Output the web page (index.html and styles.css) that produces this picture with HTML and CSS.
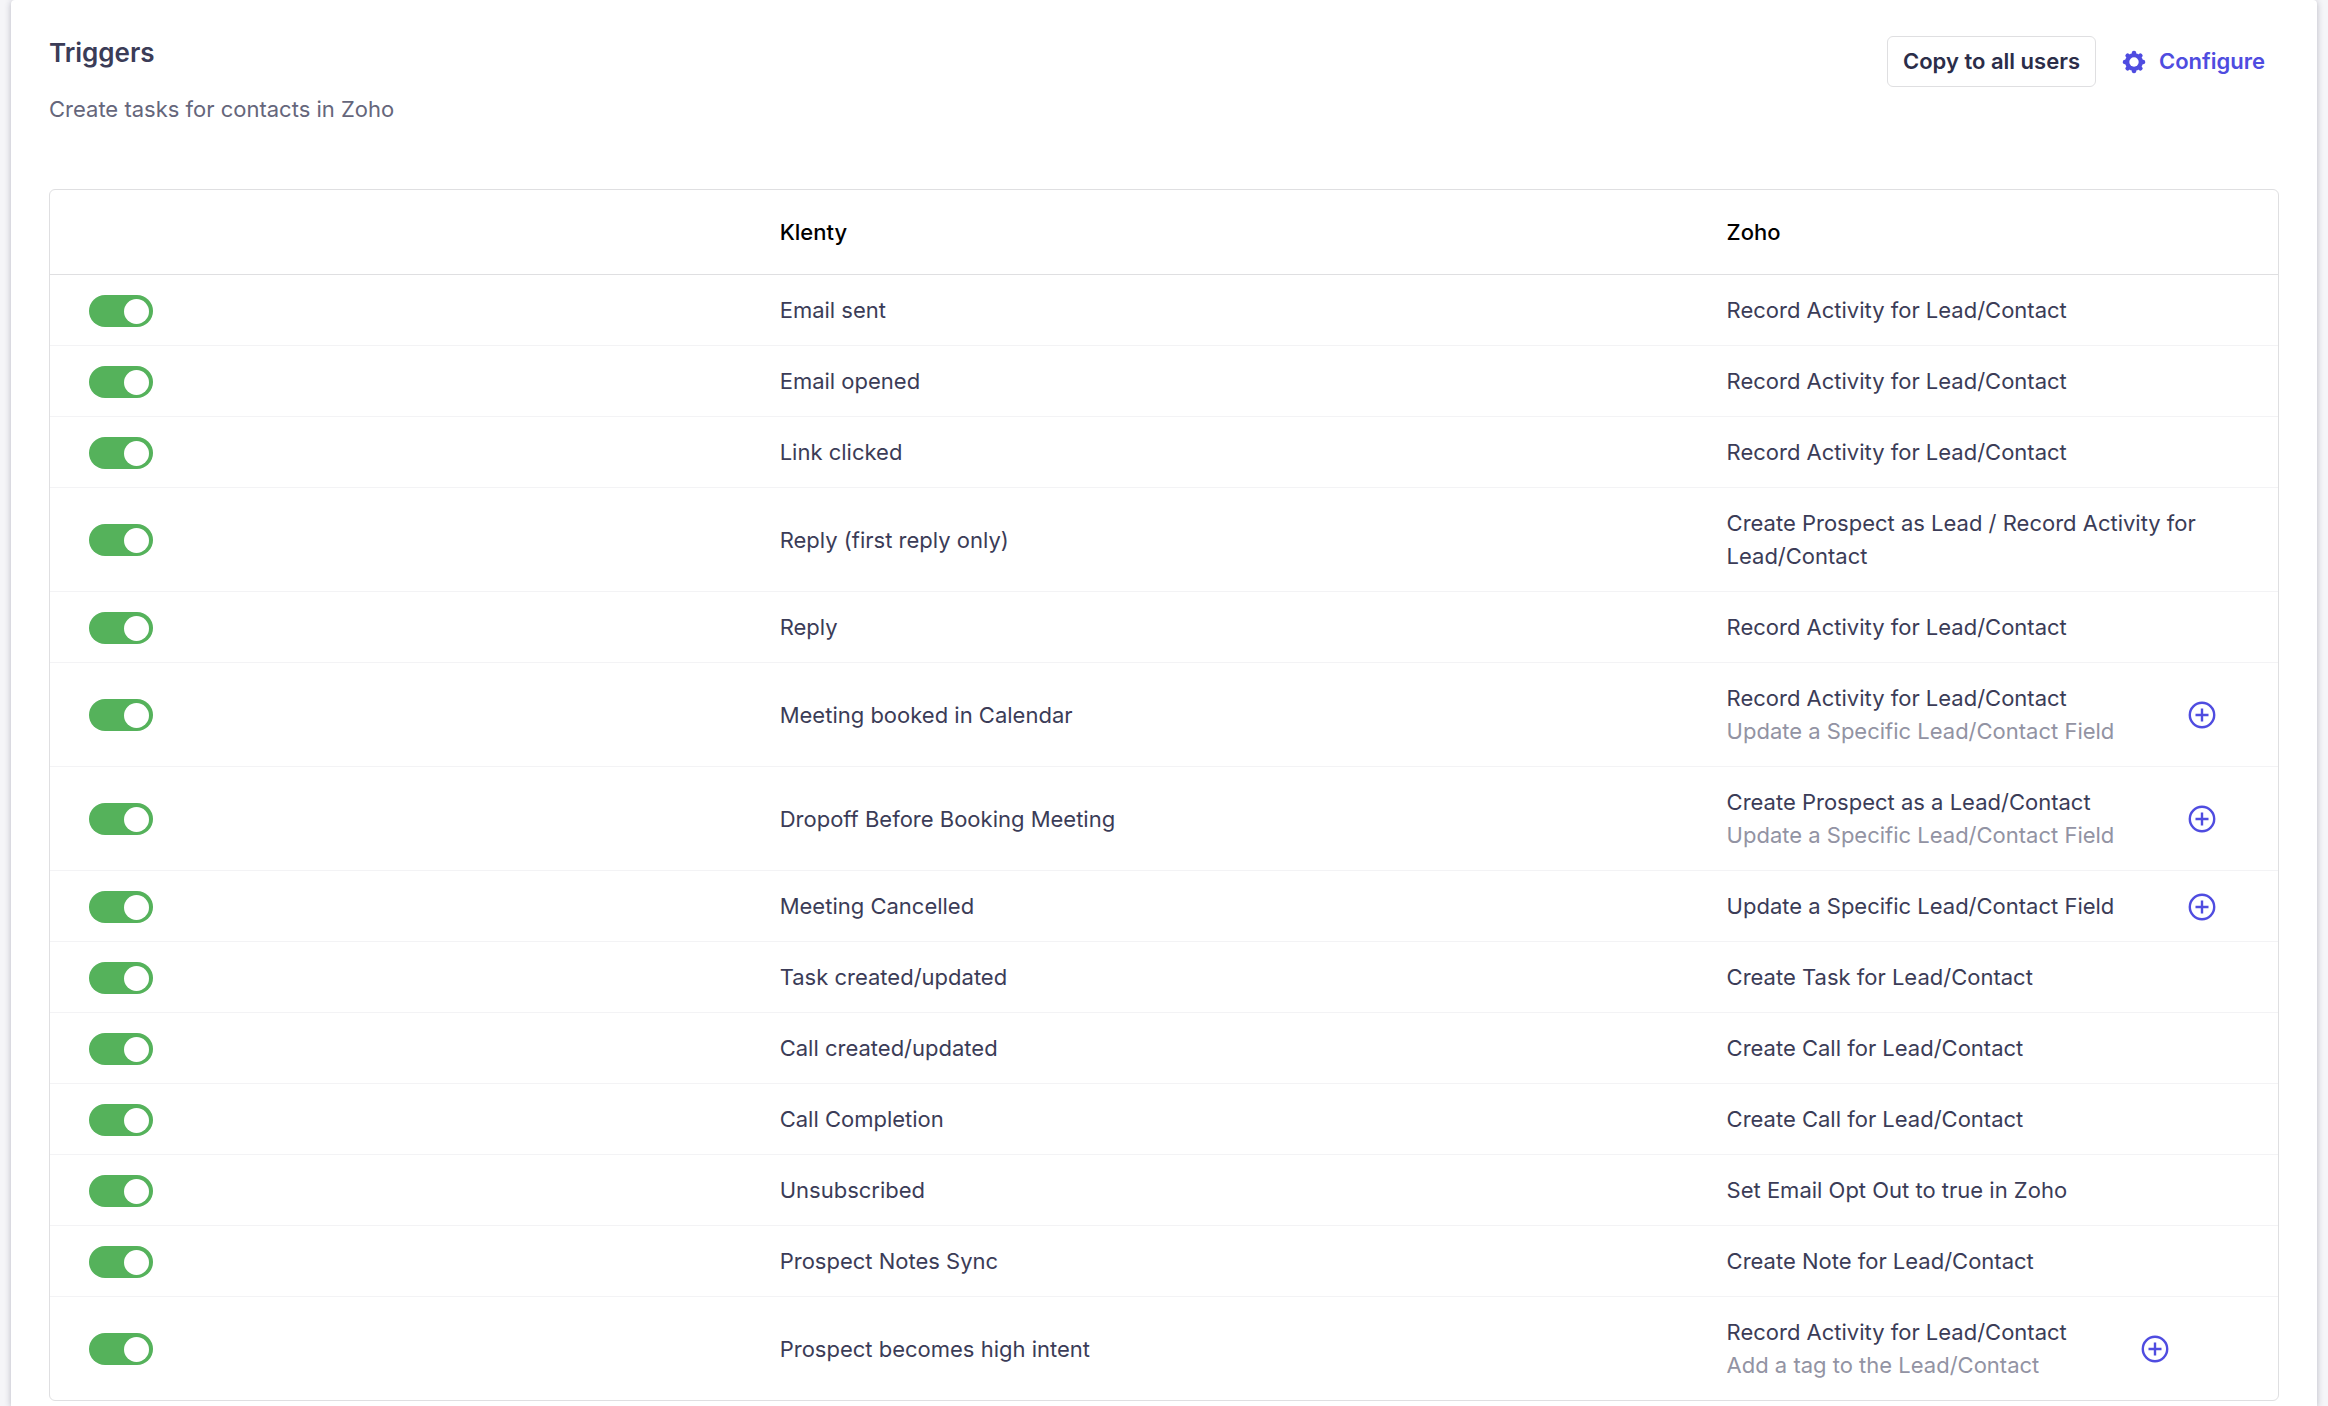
FILE: index.html
```html
<!DOCTYPE html>
<html lang="en">
<head>
<meta charset="utf-8">
<title>Triggers</title>
<link rel="stylesheet" href="styles.css">
</head>
<body>
<svg class="sprite" aria-hidden="true">
  <symbol id="plus" viewBox="0 0 28 28"><circle cx="14" cy="14" r="12.2"/><path d="M14 7.5v13M7.5 14h13"/></symbol>
</svg>
<main class="card">
  <header class="card-head">
    <div>
      <h1 class="title">Triggers</h1>
      <p class="subtitle">Create tasks for contacts in Zoho</p>
    </div>
    <div class="actions">
      <button class="btn btn-outline" type="button">Copy to all users</button>
      <button class="btn btn-link" type="button">
        <svg class="gear" viewBox="0 0 24 24" aria-hidden="true"><g><rect x="9.8" y="0.8" width="4.4" height="22.4" rx="2"/><rect x="9.8" y="0.8" width="4.4" height="22.4" rx="2" transform="rotate(45 12 12)"/><rect x="9.8" y="0.8" width="4.4" height="22.4" rx="2" transform="rotate(90 12 12)"/><rect x="9.8" y="0.8" width="4.4" height="22.4" rx="2" transform="rotate(135 12 12)"/><circle cx="12" cy="12" r="9"/></g><circle class="gear-hole" cx="12" cy="12" r="4.7"/></svg>
        Configure
      </button>
    </div>
  </header>
  <div class="table-frame">
    <table class="triggers">
      <colgroup><col class="col-toggle"><col class="col-event"><col class="col-action"></colgroup>
      <thead>
        <tr><td></td><th scope="col">Klenty</th><th scope="col">Zoho</th></tr>
      </thead>
      <tbody>
        <tr><td><input class="toggle" type="checkbox" id="t1" checked></td><td><label for="t1">Email sent</label></td><td>Record Activity for Lead/Contact</td></tr>
        <tr><td><input class="toggle" type="checkbox" id="t2" checked></td><td><label for="t2">Email opened</label></td><td>Record Activity for Lead/Contact</td></tr>
        <tr><td><input class="toggle" type="checkbox" id="t3" checked></td><td><label for="t3">Link clicked</label></td><td>Record Activity for Lead/Contact</td></tr>
        <tr><td><input class="toggle" type="checkbox" id="t4" checked></td><td><label for="t4">Reply (first reply only)</label></td><td>Create Prospect as Lead / Record Activity for Lead/Contact</td></tr>
        <tr><td><input class="toggle" type="checkbox" id="t5" checked></td><td><label for="t5">Reply</label></td><td>Record Activity for Lead/Contact</td></tr>
        <tr><td><input class="toggle" type="checkbox" id="t6" checked></td><td><label for="t6">Meeting booked in Calendar</label></td><td><div class="action"><div>Record Activity for Lead/Contact<div class="muted">Update a Specific Lead/Contact Field</div></div><button class="add" type="button" aria-label="Add"><svg><use href="#plus"/></svg></button></div></td></tr>
        <tr><td><input class="toggle" type="checkbox" id="t7" checked></td><td><label for="t7">Dropoff Before Booking Meeting</label></td><td><div class="action"><div>Create Prospect as a Lead/Contact<div class="muted">Update a Specific Lead/Contact Field</div></div><button class="add" type="button" aria-label="Add"><svg><use href="#plus"/></svg></button></div></td></tr>
        <tr><td><input class="toggle" type="checkbox" id="t8" checked></td><td><label for="t8">Meeting Cancelled</label></td><td><div class="action"><div>Update a Specific Lead/Contact Field</div><button class="add" type="button" aria-label="Add"><svg><use href="#plus"/></svg></button></div></td></tr>
        <tr><td><input class="toggle" type="checkbox" id="t9" checked></td><td><label for="t9">Task created/updated</label></td><td>Create Task for Lead/Contact</td></tr>
        <tr><td><input class="toggle" type="checkbox" id="t10" checked></td><td><label for="t10">Call created/updated</label></td><td>Create Call for Lead/Contact</td></tr>
        <tr><td><input class="toggle" type="checkbox" id="t11" checked></td><td><label for="t11">Call Completion</label></td><td>Create Call for Lead/Contact</td></tr>
        <tr><td><input class="toggle" type="checkbox" id="t12" checked></td><td><label for="t12">Unsubscribed</label></td><td>Set Email Opt Out to true in Zoho</td></tr>
        <tr><td><input class="toggle" type="checkbox" id="t13" checked></td><td><label for="t13">Prospect Notes Sync</label></td><td>Create Note for Lead/Contact</td></tr>
        <tr><td><input class="toggle" type="checkbox" id="t14" checked></td><td><label for="t14">Prospect becomes high intent</label></td><td><div class="action"><div>Record Activity for Lead/Contact<div class="muted">Add a tag to the Lead/Contact</div></div><button class="add" type="button" aria-label="Add"><svg><use href="#plus"/></svg></button></div></td></tr>
      </tbody>
    </table>
  </div>
</main>
</body>
</html>
```
FILE: styles.css
```css
* { box-sizing: border-box; }

body {
  margin: 0;
  padding: 0 11px;
  background: #f5f5f8;
  color: #3b3c57;
  font: 400 22px/33px Inter, "Liberation Sans", sans-serif;
}

.sprite { display: none; }

.card {
  min-height: 100vh;
  padding: 36px 38px 0;
  background: #fff;
  border-radius: 4px 4px 0 0;
  box-shadow: 0 1px 6px rgba(40, 40, 70, 0.3);
}

.card-head {
  display: flex;
  justify-content: space-between;
  align-items: flex-start;
  padding-bottom: 63px;
}

.title {
  margin: 0 0 24px;
  font-size: 26px;
  font-weight: 600;
  line-height: 33px;
}

.subtitle { margin: 0; color: #65667b; }

.actions { display: flex; gap: 12px; }

.btn {
  display: flex;
  align-items: center;
  height: 51px;
  padding: 0 13px;
  border: 1px solid transparent;
  border-radius: 6px;
  background: none;
  font: inherit;
  font-weight: 600;
  color: #2b2d49;
  cursor: pointer;
}

.btn-outline { padding: 0 15px; border-color: #dfdfe1; }
.btn-link { gap: 13px; color: #4f4ce0; }

.gear { width: 24px; height: 24px; fill: currentColor; }
.gear-hole { fill: #fff; }

.table-frame {
  border: 1px solid #dfdfe1;
  border-radius: 6px;
}

.triggers {
  width: 100%;
  table-layout: fixed;
  border-collapse: separate;
  border-spacing: 0;
}

.col-toggle { width: 31%; }
.col-event { width: 42.5%; }

th, td {
  padding: 19px 39px 18px;
  border-bottom: 1px solid #f3f3f5;
  text-align: left;
  vertical-align: middle;
}

thead th, thead td {
  padding: 26px 39px 25px;
  border-bottom-color: #dfdfe1;
  color: #000;
  font-weight: 500;
}

tbody tr:last-child td { border-bottom: 0; }

.toggle {
  display: block;
  appearance: none;
  width: 64px;
  height: 32px;
  margin: 0;
  padding: 4px;
  border-radius: 16px;
  background: #b9bac6;
}

.toggle::before {
  content: "";
  display: block;
  width: 25px;
  height: 25px;
  border-radius: 50%;
  background: #fff;
}

.toggle:checked { background: #55b25b; }
.toggle:checked::before { margin-left: auto; }

.action { display: flex; align-items: center; gap: 74px; }
.muted { color: #9293a3; }

.add {
  display: block;
  flex: none;
  width: 28px;
  height: 28px;
  padding: 0;
  border: 0;
  background: none;
  cursor: pointer;
}

.add svg {
  display: block;
  width: 28px;
  height: 28px;
  fill: none;
  stroke: #4f4ce0;
  stroke-width: 2.4;
}
```
